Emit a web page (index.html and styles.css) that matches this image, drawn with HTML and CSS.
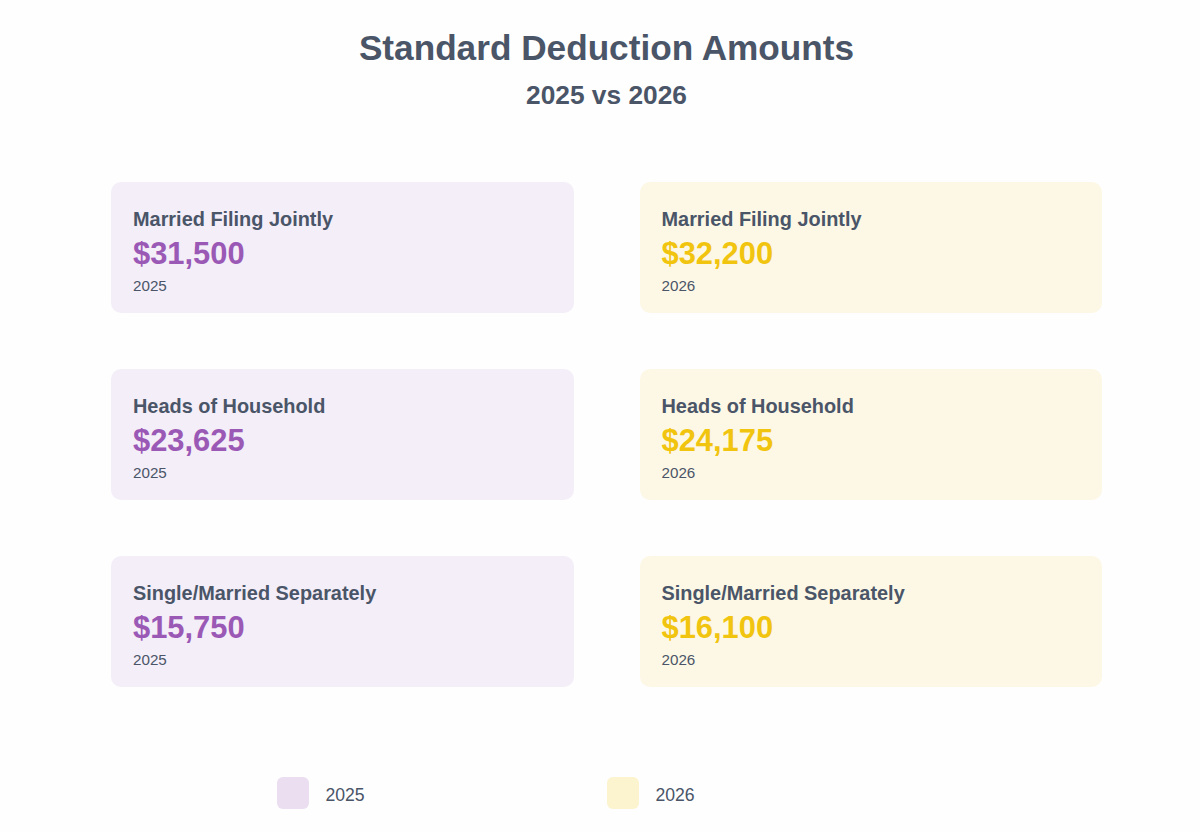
FILE: index.html
```html
<!DOCTYPE html>
<html lang="en">
<head>
<meta charset="utf-8">
<title>Standard Deduction Amounts</title>
<link rel="stylesheet" href="styles.css">
</head>
<body>
<div class="page">
  <header class="header">
    <h1 class="title">Standard Deduction Amounts</h1>
    <h2 class="subtitle">2025 vs 2026</h2>
  </header>
  <main class="grid">
    <div class="card card-2025">
      <div class="card-label">Married Filing Jointly</div>
      <div class="card-amount">$31,500</div>
      <div class="card-year">2025</div>
    </div>
    <div class="card card-2026">
      <div class="card-label">Married Filing Jointly</div>
      <div class="card-amount">$32,200</div>
      <div class="card-year">2026</div>
    </div>
    <div class="card card-2025">
      <div class="card-label">Heads of Household</div>
      <div class="card-amount">$23,625</div>
      <div class="card-year">2025</div>
    </div>
    <div class="card card-2026">
      <div class="card-label">Heads of Household</div>
      <div class="card-amount">$24,175</div>
      <div class="card-year">2026</div>
    </div>
    <div class="card card-2025">
      <div class="card-label">Single/Married Separately</div>
      <div class="card-amount">$15,750</div>
      <div class="card-year">2025</div>
    </div>
    <div class="card card-2026">
      <div class="card-label">Single/Married Separately</div>
      <div class="card-amount">$16,100</div>
      <div class="card-year">2026</div>
    </div>
  </main>
  <footer class="legend">
    <div class="legend-item">
      <span class="swatch swatch-2025"></span>
      <span class="legend-text">2025</span>
    </div>
    <div class="legend-item">
      <span class="swatch swatch-2026"></span>
      <span class="legend-text">2026</span>
    </div>
  </footer>
</div>
</body>
</html>
```

FILE: styles.css
```css
html, body {
  margin: 0;
  padding: 0;
  background: #fefefe;
}

body {
  font-family: "Liberation Sans", Arial, sans-serif;
  color: #4a5568;
}

.page {
  width: 1187px;
  padding-left: 13px;
  height: 832px;
  display: flex;
  flex-direction: column;
  align-items: center;
}

.header {
  display: flex;
  flex-direction: column;
  align-items: center;
  padding-top: 27px;
}

.title {
  margin: 0;
  font-size: 35.2px;
  line-height: 42px;
  font-weight: 700;
  color: #4a5568;
}

.subtitle {
  margin: 11px 0 0 0;
  font-size: 26.3px;
  line-height: 30px;
  font-weight: 700;
  color: #4a5568;
}

.grid {
  margin-top: 72px;
  width: 991px;
  display: grid;
  grid-template-columns: 1fr 1fr;
  column-gap: 66px;
  row-gap: 56px;
}

.card {
  box-sizing: border-box;
  height: 131px;
  padding: 26px 22px 18px 22px;
  border-radius: 10px;
  display: flex;
  flex-direction: column;
}

.card-2025 {
  background: #f4eef8;
}

.card-2026 {
  background: #fdf8e6;
}

.card-label {
  font-size: 19.9px;
  line-height: 22px;
  font-weight: 700;
  color: #4a5568;
}

.card-amount {
  margin-top: 6px;
  font-size: 30.9px;
  line-height: 36px;
  font-weight: 700;
}

.card-2025 .card-amount {
  color: #9b59b6;
}

.card-2026 .card-amount {
  color: #f1c40f;
}

.card-year {
  margin-top: 5px;
  font-size: 15.2px;
  line-height: 18px;
  color: #4a5568;
}

.legend {
  margin-top: 90px;
  display: flex;
}

.legend-item {
  width: 330px;
  display: flex;
  align-items: center;
  gap: 17px;
}

.swatch {
  width: 32px;
  height: 32px;
  border-radius: 6px;
  flex: none;
}

.swatch-2025 {
  background: #ebdef0;
}

.swatch-2026 {
  background: #fcf3cf;
}

.legend-text {
  font-size: 17.6px;
  line-height: 20px;
  color: #4a5568;
  position: relative;
  top: 2px;
}
```
